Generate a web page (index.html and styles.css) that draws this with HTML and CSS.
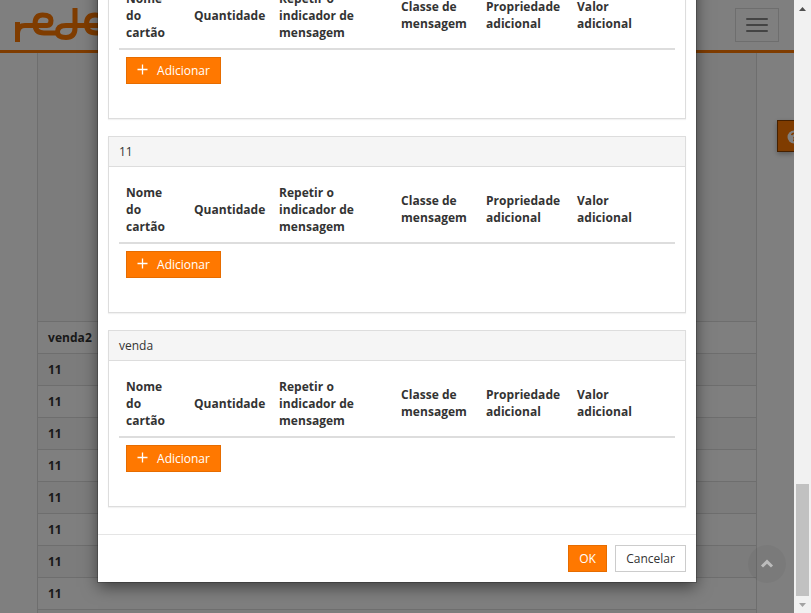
FILE: index.html
```html
<!DOCTYPE html>
<html lang="pt-BR">
<head>
<meta charset="utf-8">
<title>rede</title>
<link rel="stylesheet" href="styles.css">
</head>
<body>
<div class="window">
  <main class="viewport">
    <header class="navbar">
      <svg class="logo" width="132" height="50" viewBox="0 0 132 50" fill="none" stroke="#ff7800" stroke-width="5">
        <path d="M17.500 42V22M17.500 33Q18 25.500 25 25.500H47Q51 25.500 51 20.500Q51 15 42.500 15Q35 15 35 24Q35 33 44 33H58"/>
        <path d="M75 8V28Q75 37.500 66 37.500Q57.500 37.500 57.500 32Q57.500 25.500 66 25.500H98Q103 25.500 103 20.500Q103 15 95 15Q86.500 15 86.500 24Q86.500 33 96 33H108"/>
      </svg>
      <div class="toggle"><span></span><span></span><span></span></div>
    </header>
    <section class="sheet">
      <div class="blank"></div>
      <div class="row">venda2</div>
      <div class="row">11</div>
      <div class="row">11</div>
      <div class="row">11</div>
      <div class="row">11</div>
      <div class="row">11</div>
      <div class="row">11</div>
      <div class="row">11</div>
      <div class="row">11</div>
      <div class="row"></div>
    </section>
    <div class="help"><svg width="14" height="14" viewBox="0 0 14 14"><circle cx="7" cy="7" r="6.500" fill="#fff"/><path d="M4.700 5.200Q5 3.300 7 3.300Q9.200 3.400 9.200 5.200Q9.200 6.300 7.900 6.900Q7 7.300 7 8.500M7 9.600V11.200" fill="none" stroke="#ff7800" stroke-width="1.700"/></svg></div>
    <div class="overlay">
      <div class="modal">
        <div class="modal-body">
          <section class="panel">
            <div class="panel-heading">11</div>
            <div class="panel-body">
              <table>
                <thead><tr><th class="c1">Nome do cartão</th><th class="c2">Quantidade</th><th class="c3">Repetir o indicador de mensagem</th><th class="c4">Classe de mensagem</th><th class="c5">Propriedade adicional</th><th class="c6">Valor<br>adicional</th></tr></thead>
                <tbody><tr><td colspan="6"><button class="btn primary add"><svg width="11" height="11" viewBox="0 0 11 11"><path d="M5.500 0.500V10.500M0.500 5.500H10.500" stroke="#fff" stroke-width="1.300"/></svg>Adicionar</button></td></tr></tbody>
              </table>
            </div>
          </section>
          <section class="panel">
            <div class="panel-heading">11</div>
            <div class="panel-body">
              <table>
                <thead><tr><th class="c1">Nome do cartão</th><th class="c2">Quantidade</th><th class="c3">Repetir o indicador de mensagem</th><th class="c4">Classe de mensagem</th><th class="c5">Propriedade adicional</th><th class="c6">Valor<br>adicional</th></tr></thead>
                <tbody><tr><td colspan="6"><button class="btn primary add"><svg width="11" height="11" viewBox="0 0 11 11"><path d="M5.500 0.500V10.500M0.500 5.500H10.500" stroke="#fff" stroke-width="1.300"/></svg>Adicionar</button></td></tr></tbody>
              </table>
            </div>
          </section>
          <section class="panel">
            <div class="panel-heading">venda</div>
            <div class="panel-body">
              <table>
                <thead><tr><th class="c1">Nome do cartão</th><th class="c2">Quantidade</th><th class="c3">Repetir o indicador de mensagem</th><th class="c4">Classe de mensagem</th><th class="c5">Propriedade adicional</th><th class="c6">Valor<br>adicional</th></tr></thead>
                <tbody><tr><td colspan="6"><button class="btn primary add"><svg width="11" height="11" viewBox="0 0 11 11"><path d="M5.500 0.500V10.500M0.500 5.500H10.500" stroke="#fff" stroke-width="1.300"/></svg>Adicionar</button></td></tr></tbody>
              </table>
            </div>
          </section>
        </div>
        <footer class="modal-footer">
          <button class="btn primary ok">OK</button>
          <button class="btn cancel">Cancelar</button>
        </footer>
      </div>
    </div>
    <div class="to-top"><svg width="14" height="10" viewBox="0 0 14 10"><path d="M2 7.500L7 2.700L12 7.500" fill="none" stroke="#bcbcbc" stroke-width="3"/></svg></div>
  </main>
  <aside class="scrollbar">
    <svg width="17" height="17" viewBox="0 0 17 17"><path d="M5 11L8.500 7L12 11Z" fill="#505050"/></svg>
    <div class="thumb"></div>
    <svg width="17" height="17" viewBox="0 0 17 17"><path d="M5 7L8.500 11L12 7Z" fill="#a3a3a3"/></svg>
  </aside>
</div>
</body>
</html>
```
FILE: styles.css
```css
* { box-sizing: border-box; }
body { margin: 0; font: 12px/17px "Open Sans", sans-serif; color: #333; }
.window { display: flex; width: 811px; height: 613px; overflow: hidden; }
.viewport { position: relative; width: 794px; height: 613px; overflow: hidden; background: #fff; }
.navbar { display: flex; justify-content: space-between; height: 53px; border-bottom: 3px solid #ff7800; }
.logo { display: block; }
.toggle { display: flex; flex-direction: column; justify-content: center; gap: 4px; width: 44px; height: 34px; margin: 8px 15px 0 0; padding-left: 10px; border: 1px solid #ddd; }
.toggle span { width: 22px; height: 2px; border-radius: 1px; background: #888; }
.sheet { width: 720px; margin-left: 37px; border: solid #ddd; border-width: 0 1px; }
.blank { height: 268px; background: #f9f9f9; }
.row { height: 32px; padding: 7px 10px 0; border-top: 1px solid #ddd; font-weight: 700; letter-spacing: .05px; }
.row:nth-child(odd) { background: #f9f9f9; }
.row:nth-child(n+3) { letter-spacing: 0; }
.help { position: absolute; right: 0; top: 120px; width: 17px; height: 32px; padding: 9px 0 0 9px; overflow: hidden; border: 1px solid #8a4100; border-right: 0; background: #ff7800; box-shadow: 0 2px 5px rgba(0,0,0,.3); }
.to-top { position: absolute; left: 748px; top: 545px; display: flex; align-items: center; justify-content: center; width: 38px; height: 38px; border-radius: 50%; background: rgba(0,0,0,.04); }
.overlay { position: absolute; inset: 0; display: flex; flex-direction: column; justify-content: flex-end; align-items: center; padding: 0 0 31px; background: rgba(0,0,0,.5); }
.modal { flex: none; width: 598px; background: #fff; box-shadow: 0 5px 15px rgba(0,0,0,.5), 0 0 0 1px rgba(0,0,0,.2); }
.modal-body { display: flex; flex-direction: column; gap: 17px; padding: 10px 10px 27px; }
.panel { height: 177px; border: 1px solid #ddd; box-shadow: 0 1px 1px rgba(0,0,0,.05); }
.panel-heading { height: 30px; padding: 6px 10px; border-bottom: 1px solid #ddd; background: #f5f5f5; }
.panel-body { padding: 10px; }
table { width: 556px; table-layout: fixed; border-spacing: 0; }
th { padding: 7px; text-align: left; vertical-align: middle; border-bottom: 2px solid #ddd; letter-spacing: .04px; }
td { padding: 7px; }
.c1 { width: 68px; }
.c2 { width: 85px; }
.c3 { width: 122px; }
.c4 { width: 85px; }
.c5 { width: 91px; }
.c6 { width: 105px; }
.c4, .c5, .c6 { padding: 6px 7px 8px; }
.btn { display: flex; align-items: center; justify-content: center; height: 27px; padding: 0; font: 12px/17px "Open Sans", sans-serif; color: #333; border: 1px solid #ccc; background: #fff; }
.primary { color: #fff; background: #ff7800; border-color: #e66c00; }
.add { width: 95px; gap: 9px; }
.add svg { margin-bottom: 2px; }
.modal-footer { display: flex; justify-content: flex-end; gap: 8px; height: 48px; padding: 10px; border-top: 1px solid #e5e5e5; }
.ok { width: 39px; }
.cancel { width: 71px; }
.scrollbar { display: flex; flex-direction: column; width: 17px; background: #f1f1f1; }
.thumb { width: 13px; height: 112px; margin: auto 2px 0; background: #c1c1c1; }
```
